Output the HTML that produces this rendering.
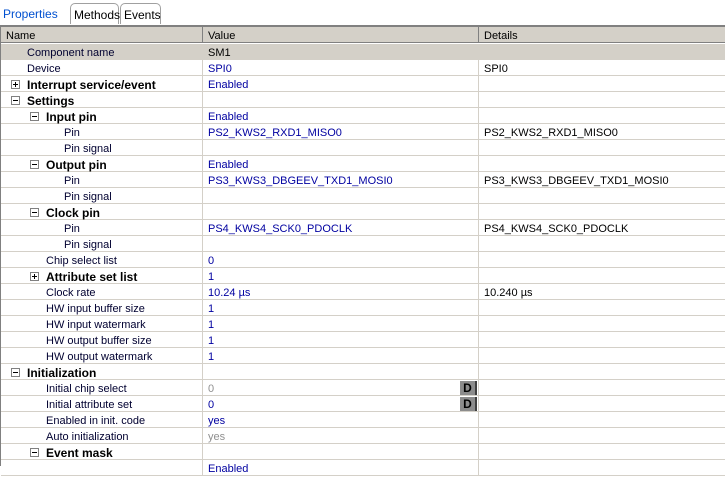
<!DOCTYPE html><html><head><style>
body{margin:0;width:725px;height:465px;overflow:hidden;background:#fff;font-family:"Liberation Sans",sans-serif;font-size:11px;position:relative}
.tabs{position:absolute;left:0;top:0;width:725px;height:25px;background:#fff;border-bottom:1px solid #808080}
.tab{position:absolute;top:3px;height:21px;line-height:22px;border:1px solid #a0a0a0;border-bottom:none;border-radius:5px 5px 0 0;padding:0 3px;background:#fff;font-size:12px;box-sizing:border-box}
.grid{position:absolute;left:0;top:26px;width:724px;height:439px;border-left:1px solid #808080;border-top:1px solid #808080}
.hdr{position:absolute;top:0;height:16px;line-height:18px;background:#d4d0c8;border-right:1px solid #808080;border-bottom:1px solid #808080;padding-left:5px;box-sizing:border-box;color:#000}
.row{position:absolute;left:0;width:724px;height:16px;border-bottom:1px solid #d4d0c8;box-sizing:border-box;line-height:15px}
.c{position:absolute;top:2px;height:14px;white-space:nowrap}
.v{color:#0000a0}
.n{color:#000030}
.b{font-weight:bold;font-size:12px;color:#000}
.g{color:#909090}
.box{position:absolute;top:4px;width:7px;height:7px;border:1px solid #808080;background:#fff}
.box:before{content:"";position:absolute;left:1px;top:3px;width:5px;height:1px;background:#000}
.plus:after{content:"";position:absolute;left:3px;top:1px;width:1px;height:5px;background:#000}
.vl{position:absolute;top:0;width:1px;height:15px;background:#d4d0c8}
.D{position:absolute;left:459px;top:1px;width:15px;height:14px;background:#8c8c8c;border-right:2px solid #404040;font-weight:bold;font-size:12px;line-height:15px;text-align:center;color:#000}
</style></head><body>
<div class="tabs">
<div class="tab" style="left:0;width:66px;color:#0050d0;border:none;">Properties</div>
<div class="tab" style="left:70px;width:49px;">Methods</div>
<div class="tab" style="left:120px;width:41px;">Events</div>
</div>
<div class="grid">
<div class="hdr" style="left:0;width:202px">Name</div>
<div class="hdr" style="left:202px;width:276px">Value</div>
<div class="hdr" style="left:478px;width:246px;border-right:none">Details</div>
<div id="rows"></div>
</div>
<script>
var R=[
["","Component name",26,"SM1","",0,"gray"],
["","Device",26,"SPI0","SPI0"],
["+","Interrupt service/event",26,"Enabled","",1],
["-","Settings",26,"","",1],
["-","Input pin",45,"Enabled","",1],
["","Pin",63,"PS2_KWS2_RXD1_MISO0","PS2_KWS2_RXD1_MISO0"],
["","Pin signal",63,"",""],
["-","Output pin",45,"Enabled","",1],
["","Pin",63,"PS3_KWS3_DBGEEV_TXD1_MOSI0","PS3_KWS3_DBGEEV_TXD1_MOSI0"],
["","Pin signal",63,"",""],
["-","Clock pin",45,"","",1],
["","Pin",63,"PS4_KWS4_SCK0_PDOCLK","PS4_KWS4_SCK0_PDOCLK"],
["","Pin signal",63,"",""],
["","Chip select list",45,"0",""],
["+","Attribute set list",45,"1","",1],
["","Clock rate",45,"10.24 µs","10.240 µs"],
["","HW input buffer size",45,"1",""],
["","HW input watermark",45,"1",""],
["","HW output buffer size",45,"1",""],
["","HW output watermark",45,"1",""],
["-","Initialization",26,"","",1],
["","Initial chip select",45,"0","",0,"gv","D"],
["","Initial attribute set",45,"0","",0,"","D"],
["","Enabled in init. code",45,"yes",""],
["","Auto initialization",45,"yes","",0,"gv"],
["-","Event mask",45,"","",1],
["","",45,"Enabled",""]];
var h="";
R.forEach(function(r,i){
var top=17+16*i;
var bg=r[6]=="gray"?"background:#d4d0c8;":"";
h+='<div class="row" style="top:'+top+'px;'+bg+'">';
if(r[0]){h+='<div class="box '+(r[0]=="+"?"plus":"")+'" style="left:'+(r[2]-16)+'px"></div>';}
h+='<div class="c '+(r[5]?'b':'n')+'" style="left:'+r[2]+'px">'+r[1]+'</div>';
h+='<div class="vl" style="left:201px"></div><div class="vl" style="left:477px"></div>';
var vc=r[6]=="gray"?"":(r[6]=="gv"?"g":"v");
h+='<div class="c '+vc+'" style="left:207px">'+r[3]+'</div>';
if(r[7])h+='<div class="D">D</div>';
h+='<div class="c" style="left:483px">'+r[4]+'</div>';
h+='</div>';});
document.getElementById("rows").innerHTML=h;
</script>
</body></html>
